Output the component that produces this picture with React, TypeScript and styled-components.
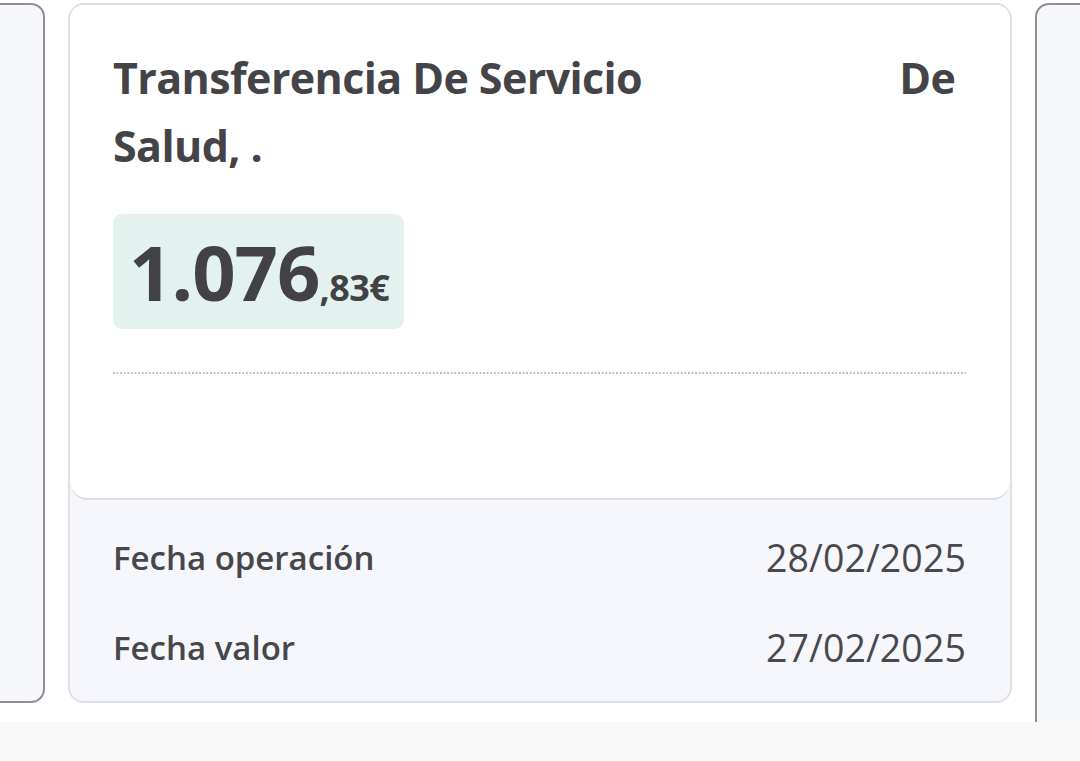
import React from "react";
import styled, { createGlobalStyle } from "styled-components";

const GlobalStyle = createGlobalStyle`
  html, body {
    margin: 0;
    padding: 0;
    background: #f8f8f8;
    font-family: "Open Sans", "Liberation Sans", sans-serif;
  }
`;

const Viewport = styled.div`
  width: 1080px;
  height: 722px;
  overflow: hidden;
  background: #ffffff;
`;

const Track = styled.div`
  display: flex;
  align-items: flex-start;
  gap: 23px;
  margin-left: -899px;
  padding-top: 3px;
`;

const PeekCard = styled.div<{ tall?: boolean }>`
  flex: 0 0 944px;
  height: ${props => props.tall ? '760px' : '700px'};
  box-sizing: border-box;
  background: #f6f7fb;
  border: 2px solid #8e8e93;
  border-radius: 14px;
`;

const Card = styled.div`
  flex: 0 0 944px;
  height: 700px;
  box-sizing: border-box;
  display: flex;
  flex-direction: column;
  background: #f6f7fc;
  border: 2px solid #dfe0e6;
  border-radius: 16px;
  overflow: hidden;
`;

const Top = styled.div`
  background: #ffffff;
  border-bottom: 2px solid #dcdde4;
  border-radius: 0 0 18px 18px;
  padding: 39px 44px 124px 43px;
`;

const Title = styled.h1`
  margin: 0;
  font-size: 43px;
  line-height: 68px;
  font-weight: 700;
  color: #444448;
  letter-spacing: -0.6px;
`;

// hidden part of the payer name, blanked out in the source
const Redacted = styled.span`
  display: inline-block;
  width: 236px;
`;

const AmountBox = styled.div`
  display: inline-flex;
  align-items: baseline;
  margin-top: 34px;
  height: 115px;
  box-sizing: border-box;
  padding: 0 15px 0 16px;
  background: #e3f2ee;
  border-radius: 9px;
  color: #424246;
  font-weight: 700;
`;

const Whole = styled.span`
  font-size: 76px;
  line-height: 115px;
  letter-spacing: -1px;
`;

const Cents = styled.span`
  font-size: 36px;
  letter-spacing: -0.6px;
`;

const Dotted = styled.div`
  margin-top: 43px;
  height: 2px;
  background-image: linear-gradient(to right, #bcbdc4 55%, transparent 55%);
  background-size: 3.6px 2px;
  background-repeat: repeat-x;
`;

const Details = styled.div`
  display: flex;
  flex-direction: column;
  gap: 40px;
  padding: 32px 44px 0 43px;
`;

const Row = styled.div`
  display: flex;
  justify-content: space-between;
  align-items: center;
  height: 50px;
`;

const Label = styled.span`
  font-size: 33px;
  font-weight: 600;
  color: #47474b;
`;

const Value = styled.span`
  font-size: 37.5px;
  font-weight: 400;
  color: #49494d;
  letter-spacing: 0.1px;
`;

const rows = [
  { label: "Fecha operación", value: "28/02/2025" },
  { label: "Fecha valor", value: "27/02/2025" },
];

const App: React.FC = () => {
  return (
    <>
      <GlobalStyle />
      <Viewport>
        <Track>
          <PeekCard />
          <Card>
            <Top>
              <Title>
                <span>Transferencia De Servicio</span> <Redacted /> <span>De</span>
                <br />
                <span>Salud, .</span>
              </Title>
              <AmountBox>
                <Whole>1.076</Whole>
                <Cents>,83€</Cents>
              </AmountBox>
              <Dotted />
            </Top>
            <Details>
              {rows.map(r => (
                <Row key={r.label}>
                  <Label>{r.label}</Label>
                  <Value>{r.value}</Value>
                </Row>
              ))}
            </Details>
          </Card>
          <PeekCard tall />
        </Track>
      </Viewport>
    </>
  );
};

export default App;
